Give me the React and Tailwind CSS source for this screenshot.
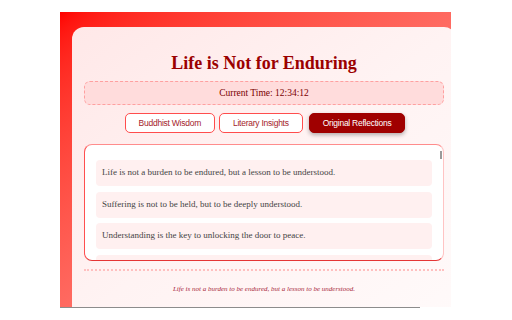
import { useState } from 'react';

// "Life is Not for Enduring" popup, quote tabs + reflection list.

const TABS = ['Buddhist Wisdom', 'Literary Insights', 'Original Reflections'];

const REFLECTIONS = [
  'Life is not a burden to be endured, but a lesson to be understood.',
  'Suffering is not to be held, but to be deeply understood.',
  'Understanding is the key to unlocking the door to peace.',
  'Every moment is a teacher, if we are willing to learn.',
];

const serif = { fontFamily: '"Liberation Serif", "DejaVu Serif", serif' };

export default function App() {
  const [tab, setTab] = useState(2);

  return (
    <div className="h-[320px] w-[512px] bg-white">
      <div className="ml-[60px] pt-[12px]">
        <div className="h-[295px] w-[391px] overflow-hidden bg-gradient-to-br from-[#ff0000] to-[#ff9c9c] pl-[12px] pt-[15px]">
          <div className="h-[300px] w-[384px] rounded-t-[12px] bg-gradient-to-br from-[#ffe8e8] via-[#fff3f3] to-[#fffafa] px-[12px] pt-[24px]">
            <h1
              className="text-center text-[18px] font-bold leading-[24px] text-[#9b0000]"
              style={serif}
            >
              Life is Not for Enduring
            </h1>

            <div
              className="mt-[6px] flex h-[24px] items-center justify-center rounded-[6px] border border-dashed border-[#ffa0a0] bg-[#ffdcdc] text-[9.5px] text-[#7a0000]"
              style={serif}
            >
              Current Time: 12:34:12
            </div>

            <div className="mt-[8px] flex justify-center gap-[4px] pl-[2px]">
              {TABS.map((t, i) => (
                <button
                  key={t}
                  onClick={() => setTab(i)}
                  className={[
                    'h-[20px] rounded-[5px] border px-[13px] text-[8.5px] leading-none',
                    i === tab
                      ? 'ml-[2px] border-[#a00000] bg-[#a00000] text-white shadow-[0_2px_4px_rgba(0,0,0,0.3)]'
                      : 'border-[#ff4d4d] bg-white text-[#a4232a]',
                  ].join(' ')}
                  style={{ fontFamily: '"Liberation Sans", Arial, sans-serif', letterSpacing: '-0.25px' }}
                >
                  {t}
                </button>
              ))}
            </div>

            <div className="relative mt-[11px] h-[117px] overflow-hidden rounded-[8px] border border-t-[#ff8c8c] border-r-[#ffc4c4] border-b-[#e53535] border-l-[#ff4f4f] bg-white px-[11px] pt-[15px]">
              <div className="absolute right-[1px] top-[6px] h-[8px] w-[2px] bg-[#9a9a9a]" />
              <div className="flex flex-col gap-[5.5px]">
                {REFLECTIONS.map((r) => (
                  <div
                    key={r}
                    className="flex h-[26px] shrink-0 items-center rounded-[4px] bg-[#fff0f0] px-[6px] text-[9px] text-[#444444]"
                    style={serif}
                  >
                    {r}
                  </div>
                ))}
              </div>
            </div>

            <div className="mt-[8px] border-t-2 border-dotted border-[#ffc0c0]" />

            <p
              className="mt-[13px] text-center text-[7px] italic text-[#a8283c]"
              style={serif}
            >
              Life is not a burden to be endured, but a lesson to be understood.
            </p>
          </div>
        </div>
        <div className="h-px w-[360px] bg-[#8c8c8c]" />
      </div>
    </div>
  );
}
